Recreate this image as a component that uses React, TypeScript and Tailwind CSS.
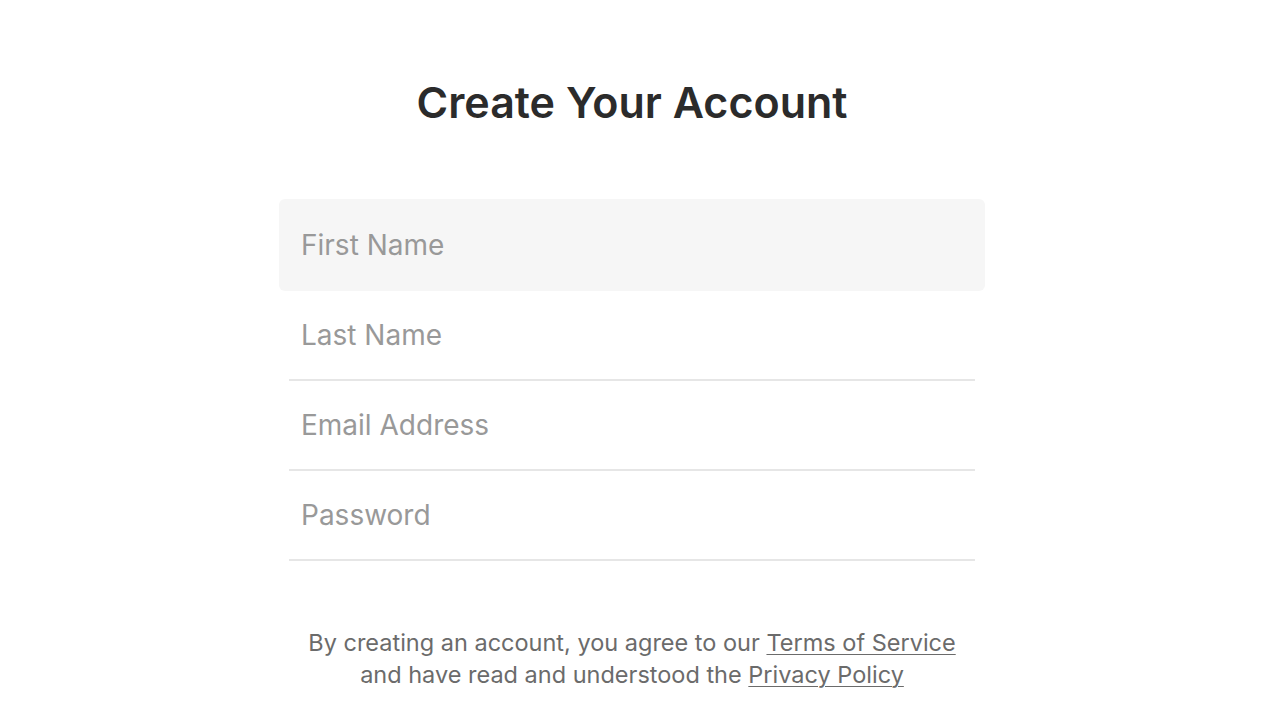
import { useState } from "react";

const fields = [
  { name: "firstName", label: "First Name", type: "text" },
  { name: "lastName", label: "Last Name", type: "text" },
  { name: "email", label: "Email Address", type: "email" },
  { name: "password", label: "Password", type: "password" },
];

export default function App() {
  const [focused, setFocused] = useState("firstName");

  return (
    <div className="min-h-screen bg-white font-['Inter',sans-serif] text-[#2b2b2b]">
      <div className="mx-auto flex w-[686px] -translate-x-px flex-col items-center pt-[76px]">
        <h1 className="text-[43px] font-semibold leading-[52px]">
          Create Your Account
        </h1>

        <form className="mt-[71px] w-full">
          {fields.map((field) => (
            <Field
              key={field.name}
              {...field}
              active={focused === field.name}
              onFocus={() => setFocused(field.name)}
            />
          ))}
        </form>

        <p className="mt-[66px] text-center text-[23.5px] leading-[32px] text-[#6b6b6b]">
          By creating an account, you agree to our{" "}
          <a href="#" className="underline decoration-1 underline-offset-[3px]">
            Terms of Service
          </a>
          <br />
          and have read and understood the{" "}
          <a href="#" className="underline decoration-1 underline-offset-[3px]">
            Privacy Policy
          </a>
        </p>
      </div>
    </div>
  );
}

function Field({
  name,
  label,
  type,
  active,
  onFocus,
}: {
  name: string;
  label: string;
  type: string;
  active: boolean;
  onFocus: () => void;
}) {
  return (
    <label
      className={
        active
          ? "-mx-2.5 block h-[92px] rounded-md bg-[#f6f6f6] px-2.5"
          : "block h-[90px] border-b-2 border-[#e6e6e6]"
      }
    >
      <input
        name={name}
        type={type}
        placeholder={label}
        autoFocus={active}
        onFocus={onFocus}
        className="h-full w-full bg-transparent px-3 text-[28px] text-[#2b2b2b] caret-[#2b2b2b] outline-none placeholder:text-[#999999]"
      />
    </label>
  );
}
